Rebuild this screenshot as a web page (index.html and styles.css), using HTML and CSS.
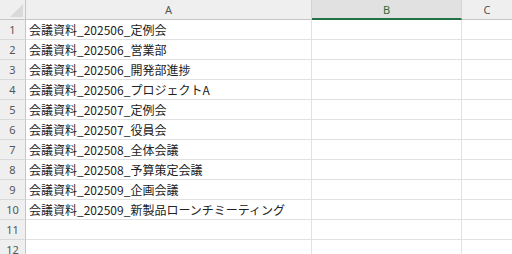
FILE: index.html
```html
<!DOCTYPE html>
<html lang="ja">
<head>
<meta charset="utf-8">
<link rel="stylesheet" href="styles.css">
</head>
<body>
<div class="sheet">
  <div class="hdr corner"><span class="tri"></span></div>
  <div class="hdr col">A</div>
  <div class="hdr col sel">B</div>
  <div class="hdr col last">C</div>

  <div class="rn">1</div><div class="cell">会議資料_202506_定例会</div><div class="cell"></div><div class="cell last"></div>
  <div class="rn">2</div><div class="cell">会議資料_202506_営業部</div><div class="cell"></div><div class="cell last"></div>
  <div class="rn">3</div><div class="cell">会議資料_202506_開発部進捗</div><div class="cell"></div><div class="cell last"></div>
  <div class="rn">4</div><div class="cell">会議資料_202506_プロジェクトA</div><div class="cell"></div><div class="cell last"></div>
  <div class="rn">5</div><div class="cell">会議資料_202507_定例会</div><div class="cell"></div><div class="cell last"></div>
  <div class="rn">6</div><div class="cell">会議資料_202507_役員会</div><div class="cell"></div><div class="cell last"></div>
  <div class="rn">7</div><div class="cell">会議資料_202508_全体会議</div><div class="cell"></div><div class="cell last"></div>
  <div class="rn">8</div><div class="cell">会議資料_202508_予算策定会議</div><div class="cell"></div><div class="cell last"></div>
  <div class="rn">9</div><div class="cell">会議資料_202509_企画会議</div><div class="cell"></div><div class="cell last"></div>
  <div class="rn">10</div><div class="cell">会議資料_202509_新製品ローンチミーティング</div><div class="cell"></div><div class="cell last"></div>
  <div class="rn">11</div><div class="cell"></div><div class="cell"></div><div class="cell last"></div>
  <div class="rn">12</div><div class="cell"></div><div class="cell"></div><div class="cell last"></div>
</div>
</body>
</html>
```
FILE: styles.css
```css
html, body {
  margin: 0;
  padding: 0;
  background: #ffffff;
  overflow: hidden;
}
.sheet {
  display: grid;
  grid-template-columns: 26px 286px 150px 50px;
  grid-auto-rows: 20px;
  width: 512px;
  font-family: "Noto Sans CJK JP", "Noto Sans", sans-serif;
}
.hdr {
  background: #efefef;
  border-bottom: 1px solid #c6c6c6;
  border-right: 1px solid #d4d4d4;
  box-sizing: border-box;
  font-family: "Noto Sans", "Liberation Sans", sans-serif;
  font-size: 11px;
  color: #555555;
  display: flex;
  align-items: center;
  justify-content: center;
  padding-bottom: 1px;
}
.hdr.last { border-right: none; }
.hdr.sel {
  background: #e1e1e1;
  border-bottom: 2px solid #217346;
  color: #2b6a3e;
  padding-bottom: 0;
}
.corner {
  position: relative;
  border-right: 1px solid #c6c6c6;
}
.tri {
  position: absolute;
  right: 2px;
  bottom: 2px;
  width: 0;
  height: 0;
  border-left: 13px solid transparent;
  border-bottom: 13px solid #d9d9d9;
}
.rn {
  background: #efefef;
  border-right: 1px solid #c6c6c6;
  border-bottom: 1px solid #dadada;
  box-sizing: border-box;
  font-family: "Noto Sans", "Liberation Sans", sans-serif;
  font-size: 11px;
  color: #555555;
  display: flex;
  align-items: center;
  justify-content: center;
}
.cell {
  border-right: 1px solid #e1e1e1;
  border-bottom: 1px solid #e1e1e1;
  box-sizing: border-box;
  font-size: 12px;
  color: #222222;
  padding-left: 3px;
  display: flex;
  align-items: center;
  white-space: nowrap;
}
.cell.last { border-right: none; }
```
